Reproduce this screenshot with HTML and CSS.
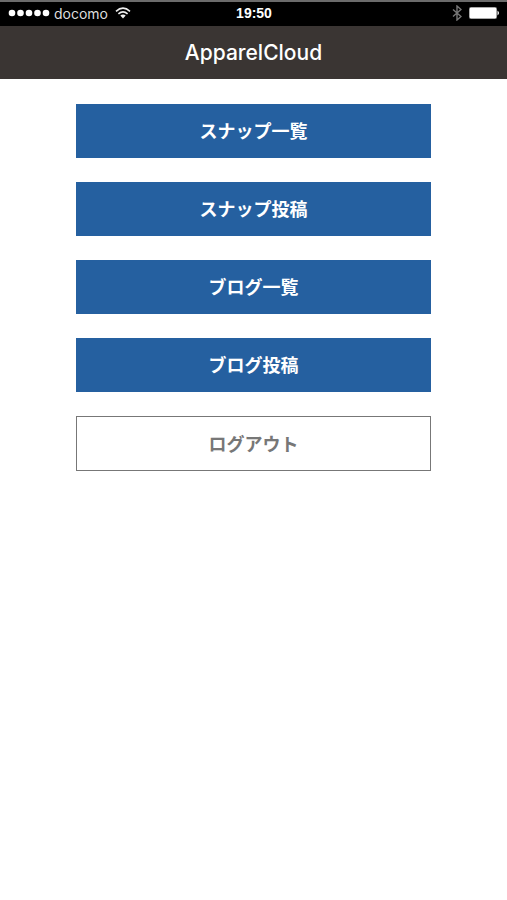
FILE: index.html
```html
<!DOCTYPE html>
<html lang="ja">
<head>
<meta charset="utf-8">
<meta name="viewport" content="width=device-width, initial-scale=1">
<title>ApparelCloud</title>
<link rel="stylesheet" href="styles.css">
</head>
<body>
<div class="status">
  <div class="carrier">
    <svg class="signal" viewBox="0 0 42 8" aria-hidden="true"><circle cx="4" cy="4" r="3.3"/><circle cx="12.5" cy="4" r="3.3"/><circle cx="21" cy="4" r="3.3"/><circle cx="29.5" cy="4" r="3.3"/><circle cx="38" cy="4" r="3.3"/></svg>
    <span>docomo</span>
    <svg class="wifi" viewBox="0 0 16 12" stroke-width="1.6" aria-hidden="true"><path d="M1 4.3Q8-1.9 15 4.3M3.4 6.8Q8 2.8 12.6 6.8"/><path class="solid" d="M5.3 8.6Q8 6.2 10.7 8.6L8 11.4Z"/></svg>
  </div>
  <time class="clock">19:50</time>
  <div class="power">
    <svg class="bluetooth" viewBox="0 0 10 16" stroke-width="1.4" aria-hidden="true"><path d="M1 4.5L9 11.5L5 15V1L9 4.5L1 11.5"/></svg>
    <svg class="battery" viewBox="0 0 31 12" aria-hidden="true"><rect class="shell" x=".5" y=".5" width="27" height="11" rx="1"/><rect class="charge" x="1" y="1" width="26" height="10"/><path class="charge" d="M28.5 3.5Q31.5 6 28.5 8.5Z"/></svg>
  </div>
</div>
<header class="header"><h1>ApparelCloud</h1></header>
<main class="menu">
  <button class="button" type="button">スナップ一覧</button>
  <button class="button" type="button">スナップ投稿</button>
  <button class="button" type="button">ブログ一覧</button>
  <button class="button" type="button">ブログ投稿</button>
  <button class="button outline" type="button">ログアウト</button>
</main>
</body>
</html>
```
FILE: styles.css
```css
* { box-sizing: border-box; }
body {
  margin: 0;
  background: #fff;
  font-family: "Liberation Sans", "Noto Sans CJK JP", sans-serif;
}
.status {
  display: grid;
  grid-template-columns: 1fr auto 1fr;
  align-items: center;
  height: 26px;
  padding: 0 7px 2px 8px;
  border-top: 2px solid #6b6b6b;
  background: #000;
  color: #fff;
  font-size: 15px;
}
.carrier, .power { display: flex; align-items: center; gap: 4px; }
.carrier { color: #ddd; font-family: Inter, "Liberation Sans", sans-serif; font-size: 14px; }
.power { justify-content: flex-end; gap: 7px; }
.signal { width: 42px; height: 8px; fill: #fff; }
.wifi { width: 16px; height: 12px; margin-left: 3px; fill: none; stroke: #eee; }
.solid { fill: #eee; stroke: none; }
.clock { font-weight: 700; font-size: 14px; }
.bluetooth { width: 10px; height: 16px; fill: none; stroke: #777; }
.battery { width: 31px; height: 12px; }
.shell { fill: none; stroke: #aaa; }
.charge { fill: #fff; }
.header {
  display: flex;
  align-items: center;
  justify-content: center;
  height: 53px;
  background: #3a3533;
  color: #fff;
}
h1 {
  margin: 0;
  font-family: Inter, "Liberation Sans", sans-serif;
  font-size: 21px;
  font-weight: 500;
  line-height: 28px;
}
.menu {
  display: grid;
  gap: 24px;
  width: 70%;
  margin: 0 auto;
  padding: 25px 0;
}
.button {
  height: 54px;
  padding: 0 0 2px;
  border: 1px solid #2560a0;
  border-radius: 0;
  background: #2560a0;
  color: #fff;
  font: 700 18px "Noto Sans CJK JP", sans-serif;
}
.outline { height: 55px; border-color: #777; background: #fff; color: #777; }
```
